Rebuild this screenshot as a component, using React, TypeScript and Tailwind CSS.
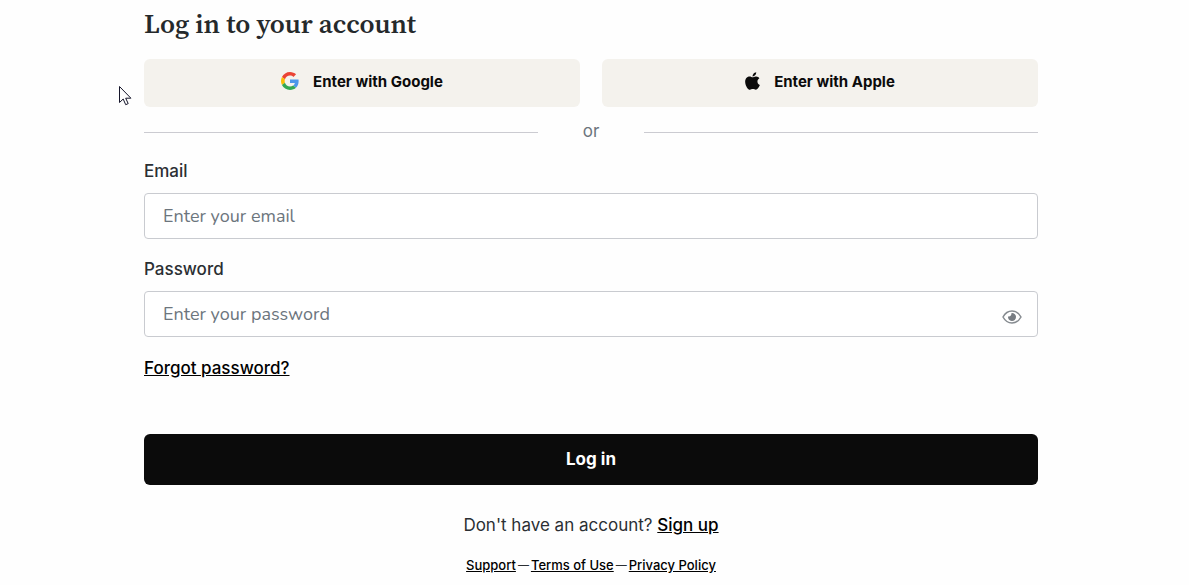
import React, { useState } from 'react';

const GoogleIcon: React.FC = () => (
  <svg viewBox="0 0 48 48" className="mb-0.5 h-[18px] w-[18px]" aria-hidden="true">
    <path fill="#EA4335" d="M24 9.5c3.54 0 6.71 1.22 9.21 3.6l6.85-6.85C35.9 2.38 30.47 0 24 0 14.62 0 6.51 5.38 2.56 13.22l7.98 6.19C12.43 13.72 17.74 9.5 24 9.5z" />
    <path fill="#4C97EA" d="M46.98 24.55c0-1.57-.15-3.09-.38-4.55H24v9.02h12.94c-.58 2.96-2.26 5.48-4.78 7.18l7.73 6c4.51-4.18 7.09-10.36 7.09-17.65z" />
    <path fill="#FBBC05" d="M10.53 28.59c-.48-1.45-.76-2.99-.76-4.59s.27-3.14.76-4.59l-7.98-6.19C.92 16.46 0 20.12 0 24c0 3.88.92 7.54 2.56 10.78l7.97-6.19z" />
    <path fill="#34A853" d="M24 48c6.48 0 11.93-2.13 15.89-5.81l-7.73-6c-2.15 1.45-4.92 2.3-8.16 2.3-6.26 0-11.57-4.22-13.47-9.91l-7.98 6.19C6.51 42.62 14.62 48 24 48z" />
  </svg>
);

const AppleIcon: React.FC = () => (
  <svg viewBox="0 31 384 449" className="mb-0.5 h-[18px] w-[15px]" fill="#0b0b0b" aria-hidden="true">
    <path d="M318.7 268.7c-.2-36.7 16.4-64.4 50-84.8-18.8-26.9-47.2-41.7-84.7-44.6-35.5-2.8-74.3 20.7-88.5 20.7-15 0-49.4-19.7-76.4-19.7C63.3 141.2 4 184.8 4 273.5q0 39.3 14.4 81.2c12.8 36.7 59 126.7 107.2 125.2 25.2-.6 43-17.9 75.8-17.9 31.8 0 48.3 17.9 76.4 17.9 48.6-.7 90.4-82.5 102.6-119.3-65.2-30.7-61.7-90-61.7-91.9zm-56.6-164.2c27.3-32.4 24.8-61.9 24-72.5-24.1 1.4-52 16.4-67.9 34.9-17.5 19.8-27.8 44.3-25.6 71.9 26.1 2 49.9-11.4 69.5-34.3z" />
  </svg>
);

const EyeIcon: React.FC = () => (
  <svg viewBox="0 0 20 14" className="h-[14px] w-5" fill="none" aria-hidden="true">
    <path d="M1 7C3 3.3 6.3 1 10 1s7 2.3 9 6c-2 3.7-5.3 6-9 6S3 10.7 1 7z" stroke="#868b90" strokeWidth="1.5" />
    <path d="M9.5 3a4 4 0 1 1-3.4 3.2c.8.4 1.9.2 2.500-.5.7-.7.9-1.700.9-2.700z" fill="#777c82" />
  </svg>
);

const Cursor: React.FC = () => (
  <svg viewBox="0 0 13 20" className="pointer-events-none absolute top-[86px] left-[119px] h-5 w-[13px]" aria-hidden="true">
    <path d="M.5.5v16l3.7-3.5 2.5 5.7 2.5-1.1-2.5-5.4h5.2z" fill="#fff" stroke="#15152a" strokeWidth="1" />
  </svg>
);

const inputClass =
  'h-[46px] w-full rounded border border-[#c9cbd0] bg-white pl-[18px] pr-12 font-[Nunito,Lato,sans-serif] text-lg text-[#212529] outline-none placeholder:text-[#6c757d]';

const App: React.FC = () => {
  const [showPassword, setShowPassword] = useState(false);

  return (
    <main className="relative bg-[#fefefe] pt-1 pr-[151px] pb-1 pl-36 font-[Inter,sans-serif] text-[#2b2f33]">
      <Cursor />
      <h1 className="mb-[15px] font-['Source_Serif_4','Source_Serif_Pro','Liberation_Serif',serif] text-[27px] leading-10 font-semibold text-[#25292b]">
        Log in to your account
      </h1>

      <div className="grid grid-cols-2 gap-[22px] text-[15px] font-bold text-[#0b0b0b]">
        <button type="button" className="flex h-12 items-center justify-center gap-3.5 rounded-md bg-[#f4f2ed] pb-0.5">
          <GoogleIcon />
          Enter with Google
        </button>
        <button type="button" className="flex h-12 items-center justify-center gap-3.5 rounded-md bg-[#f4f2ed] pb-0.5">
          <AppleIcon />
          Enter with Apple
        </button>
      </div>

      <div className="flex h-12 items-center text-[17px] text-[#6c757d]">
        <span className="mt-[3px] h-px flex-1 bg-[#cbcbd1]" />
        <span className="w-[106px] pt-0.5 text-center">or</span>
        <span className="mt-[3px] h-px flex-1 bg-[#cbcbd1]" />
      </div>

      <form onSubmit={(e) => e.preventDefault()}>
        <label htmlFor="email" className="mb-1.5 block text-[17px] leading-8 font-medium">
          Email
        </label>
        <input id="email" type="email" placeholder="Enter your email" className={inputClass} />

        <label htmlFor="password" className="mt-3.5 mb-1.5 block text-[17px] leading-8 font-medium">
          Password
        </label>
        <div className="relative">
          <input
            id="password"
            type={showPassword ? 'text' : 'password'}
            placeholder="Enter your password"
            className={inputClass}
          />
          <button
            type="button"
            aria-label="Show password"
            onClick={() => setShowPassword(!showPassword)}
            className="absolute top-[19px] right-4"
          >
            <EyeIcon />
          </button>
        </div>

        <a href="#forgot" className="mt-[15px] block w-fit text-[17px] leading-8 font-medium text-black underline">
          Forgot password?
        </a>

        <button type="submit" className="mt-[50px] h-[51px] w-full rounded-md bg-[#0b0b0b] text-[17px] font-bold text-white">
          Log in
        </button>
      </form>

      <p className="mt-6 text-center text-[17px] leading-8">
        Don't have an account?{' '}
        <a href="#signup" className="font-medium text-black underline">Sign up</a>
      </p>

      <div className="mt-2 flex justify-center gap-0.5 text-[13px] leading-8">
        <a href="#support" className="font-medium text-black underline">Support</a>
        <span className="text-[11px]">—</span>
        <a href="#terms" className="font-medium text-black underline">Terms of Use</a>
        <span className="text-[11px]">—</span>
        <a href="#privacy" className="font-medium text-black underline">Privacy Policy</a>
      </div>
    </main>
  );
};

export default App;
